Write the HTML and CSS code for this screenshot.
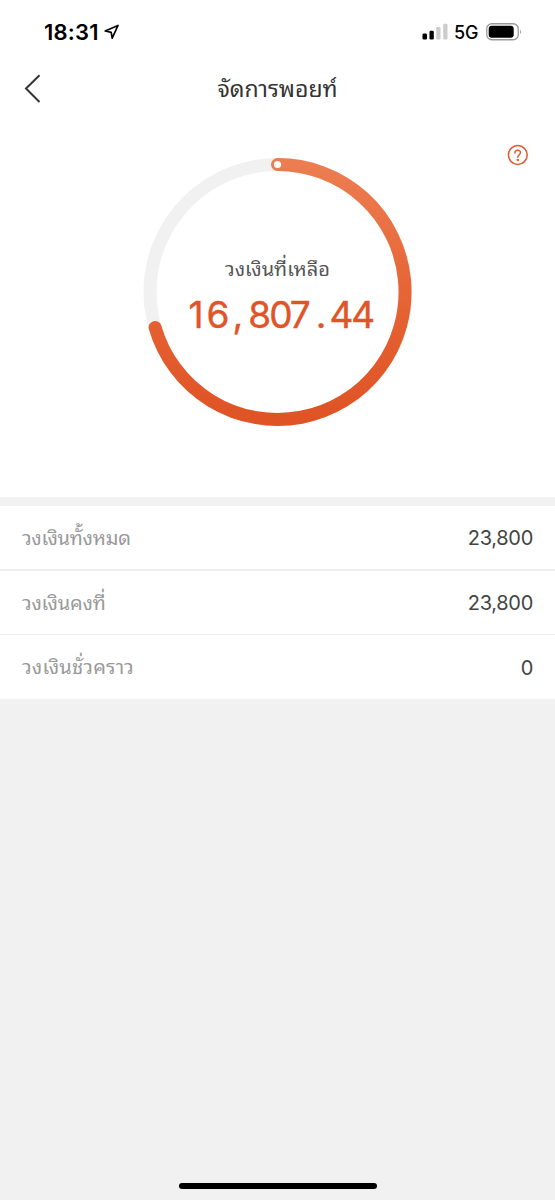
FILE: index.html
```
<!DOCTYPE html>
<html lang="th">
<head>
<meta charset="utf-8">
<title>จัดการพอยท์</title>
<link rel="stylesheet" href="styles.css">
</head>
<body>
<header class="status">
  <span class="time">18:31</span>
  <svg class="locate" width="17" height="17" viewBox="0 0 17 17"><path d="M2.200 7 15 1.500 9.200 14.200 8.200 8.300Z" fill="none" stroke="#000" stroke-width="1.700" stroke-linejoin="round"/></svg>
  <svg class="signal" width="26" height="18" viewBox="0 0 26 18"><g fill="#000"><rect x="0.500" y="10.500" width="4.500" height="6" rx="1.300"/><rect x="7.500" y="7.700" width="4.300" height="8.800" rx="1.300"/></g><g fill="#ccc"><rect x="14.200" y="4" width="4.300" height="12.500" rx="1.300"/><rect x="21.200" y="0.800" width="4.300" height="15.700" rx="1.300"/></g></svg>
  <span class="network">5G</span>
  <svg class="battery" width="37" height="18" viewBox="0 0 37 18"><rect x=".75" y=".75" width="31.500" height="16" rx="5" fill="none" stroke="#999" stroke-width="1.300"/><rect x="2.700" y="2.700" width="25" height="12" rx="3" fill="#000"/><path d="M34.200 6.200q1.800 2.500 0 5z" fill="#888"/></svg>
</header>
<nav class="nav">
  <svg class="back" width="18" height="30" viewBox="0 0 18 30"><path d="M15.500 1.300 2 14.500 15.500 28" fill="none" stroke="#333" stroke-width="2"/></svg>
  <h1 class="title">จัดการพอยท์</h1>
</nav>
<main>
  <section class="summary">
    <div class="dial">
      <svg class="ring" width="270" height="270" viewBox="0.500 0 270 270">
        <defs><linearGradient id="heat" x1="0" y1="0" x2="0" y2="1"><stop offset="0" stop-color="#ec7d51"/><stop offset=".5" stop-color="#e66435"/><stop offset="1" stop-color="#df5325"/></linearGradient></defs>
        <circle cx="135" cy="135" r="127.500" fill="none" stroke="#f1f1f1" stroke-width="13"/>
        <path d="M135 7.500A127.500 127.500 0 1 1 12.600 170.500" fill="none" stroke="url(#heat)" stroke-width="13" stroke-linecap="round"/>
        <circle cx="135" cy="7.500" r="3.600" fill="#fff"/>
      </svg>
      <div class="reading">
        <div class="caption">วงเงินที่เหลือ</div>
        <div class="amount"><span class="digits one">1</span><span class="digits">6</span><span class="mark">,</span><span class="digits">807</span><span class="mark point">.</span><span class="digits">44</span></div>
      </div>
    </div>
    <svg class="help" width="22" height="22" viewBox="0 0 22 22" fill="none" stroke="#df5b35" stroke-width="1.500"><circle cx="10.800" cy="11" r="9.400"/><path d="M7.900 8.900C7.900 5.200 13.600 5.300 13.400 8.700 13.300 10.600 10.800 10.900 10.800 13.300" stroke-linecap="round"/><circle cx="10.800" cy="16" r=".5"/></svg>
  </section>
  <section class="list">
    <div class="row"><span class="name tight">วงเงินทั้งหมด</span><span class="value">23,800</span></div>
    <div class="row"><span class="name snug">วงเงินคงที่</span><span class="value">23,800</span></div>
    <div class="row"><span class="name loose">วงเงินชั่วคราว</span><span class="value">0</span></div>
  </section>
</main>
<footer class="home"><div class="bar"></div></footer>
</body>
</html>
```
FILE: styles.css
```
* { box-sizing: border-box; }
body {
  margin: 0;
  height: 1200px;
  display: flex;
  flex-direction: column;
  background: #f1f1f1;
  color: #333;
  font-family: Inter, "Noto Sans Thai Looped", Sarabun, Loma, Garuda, Waree, sans-serif;
}
svg { display: block; flex: none; }
.status {
  height: 62px;
  padding: 2px 32px 0 44px;
  display: flex;
  align-items: center;
  background: #fff;
  color: #000;
}
.time { font-size: 22px; font-weight: 600; letter-spacing: .2px; width: 59px; white-space: nowrap; }
.signal { margin-left: auto; }
.network { width: 25px; margin: 0 7px 0 6px; font-size: 18px; font-weight: 500; letter-spacing: -.1px; }
.nav {
  height: 53px;
  padding: 0 24px;
  display: grid;
  grid-template-columns: 18px 1fr 18px;
  align-items: center;
  background: #fff;
}
.title { margin: 0; font-size: 23px; font-weight: 400; line-height: 32px; text-align: center; }
.summary {
  height: 382px;
  padding: 42px 26px 0;
  display: grid;
  grid-template-columns: 22px 1fr 22px;
  align-items: start;
  background: #fff;
}
.dial { grid-column: 2; justify-self: center; display: grid; }
.ring, .reading { grid-area: 1 / 1; }
.reading { padding-top: 97px; text-align: center; }
.caption { font-size: 20px; line-height: 30px; color: #555; }
.amount {
  margin-top: 8px;
  padding-left: 46px;
  display: flex;
  font-size: 37px;
  line-height: 46px;
  font-weight: 400;
  -webkit-text-stroke: .4px #df5428;
  color: #df5428;
}
.digits { letter-spacing: -2.100px; }
.one { width: 18px; text-align: left; }
.mark { width: 21px; text-align: center; }
.point { padding-left: 4px; }
.help { grid-column: 3; margin-top: -13px; justify-self: center; }
.list { margin-top: 9px; }
.row {
  height: 63px;
  padding: 0 22px;
  display: flex;
  align-items: center;
  justify-content: space-between;
  background: #fff;
}
.row + .row { height: 65px; border-top: 2px solid #eee; }
.row:last-child { border-top-width: 1px; }
.name { padding-bottom: 4px; font-size: 20px; color: #999; }
.tight { letter-spacing: -.25px; }
.snug { letter-spacing: -.2px; }
.loose { letter-spacing: .2px; }
.value { padding-top: 1px; font-size: 20px; letter-spacing: -.3px; color: #444; }
.home { margin-top: auto; height: 17px; display: flex; justify-content: center; }
.bar { width: 198px; height: 6px; border-radius: 3px; background: #000; }
```
